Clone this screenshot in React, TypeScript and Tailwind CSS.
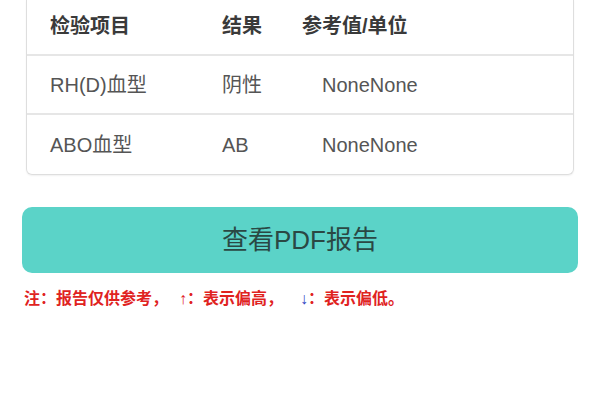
const font = "font-['Liberation_Sans','Noto_Sans_CJK_SC',sans-serif]";

const rows = [
  { name: "RH(D)血型", result: "阴性", ref: "NoneNone" },
  { name: "ABO血型", result: "AB", ref: "NoneNone" },
];

export default function App() {
  return (
    <div className={`${font} w-[600px] h-[400px] bg-white overflow-hidden`}>
      <div className="px-[26px]">
        <div className="border-x border-b border-[#dedede] rounded-b-[6px] shadow-[0_1px_2px_rgba(0,0,0,0.06)]">
          <div className="grid grid-cols-[172px_80px_1fr] h-[56px] items-center pl-[23px] border-b-2 border-[#e6e6e6] text-[20px] font-bold text-[#3a3a3a] pb-[2px]">
            <span>检验项目</span>
            <span>结果</span>
            <span>参考值/单位</span>
          </div>
          {rows.map((r, i) => (
            <div
              key={r.name}
              className={`grid grid-cols-[172px_80px_1fr] h-[59px] items-center pl-[23px] text-[20px] text-[#555] ${
                i === 0 ? "border-b-2 border-[#e6e6e6]" : ""
              }`}
            >
              <span>{r.name}</span>
              <span>{r.result}</span>
              <span className="pl-[20px]">{r.ref}</span>
            </div>
          ))}
        </div>
      </div>

      <div className="px-[22px] mt-[32px]">
        <button className="w-full h-[66px] rounded-[10px] bg-[#5bd3c8] text-[26px] text-[#2a4844] flex items-center justify-center">
          查看PDF报告
        </button>
      </div>

      <p className="mt-[16px] pl-[24px] text-[16px] font-bold text-[#e0231f] leading-[20px] whitespace-nowrap">
        注：报告仅供参考，
        <span className="inline-block w-[19px] text-right font-normal">↑</span>
        ：表示偏高，
        <span className="inline-block w-[25px] text-right font-normal text-[#3247c4]">↓</span>
        ：表示偏低。
      </p>
    </div>
  );
}
